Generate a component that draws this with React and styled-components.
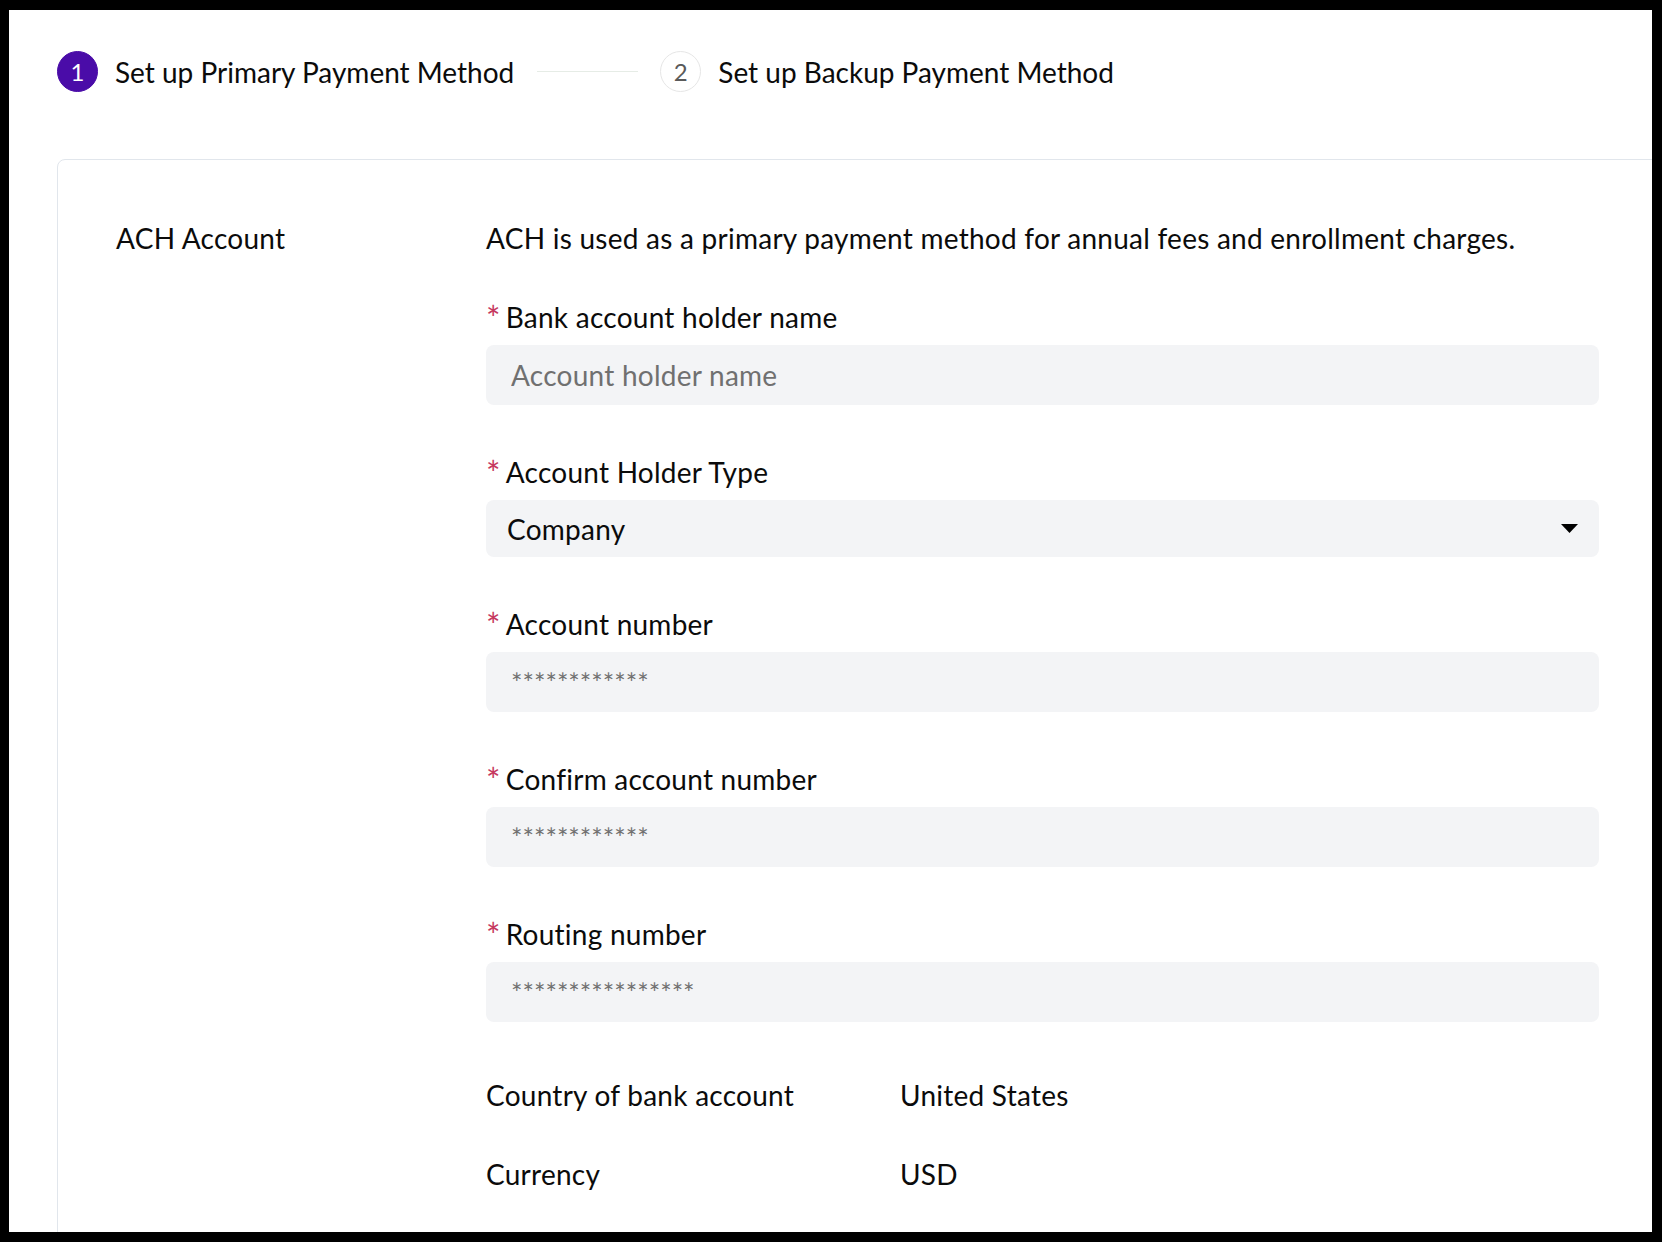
import React from "react";
import styled, { createGlobalStyle } from "styled-components";

const GlobalStyle = createGlobalStyle`
  html, body {
    margin: 0;
    padding: 0;
    background: #000;
  }
  * { box-sizing: border-box; }
  body {
    font-family: Lato, "Liberation Sans", sans-serif;
    color: #0b0b0b;
  }
`;

const Frame = styled.div`
  width: 1662px;
  height: 1242px;
  padding: 10px 10px 10px 9px;
  background: #000;
`;

const Panel = styled.div`
  width: 100%;
  height: 100%;
  background: #fff;
  overflow: hidden;
  padding: 41px 0 0 48px;
`;

const Stepper = styled.div`
  display: flex;
  align-items: center;
  height: 41px;
`;

const Step = styled.div`
  display: flex;
  align-items: center;
  gap: 17px;
`;

const StepDot = styled.div`
  width: 41px;
  height: 41px;
  border-radius: 50%;
  display: flex;
  align-items: center;
  justify-content: center;
  font-size: 24px;
  background: ${(p) => (p.$active ? "#4a0ca8" : "#fff")};
  color: ${(p) => (p.$active ? "#fff" : "#5a5a5a")};
  border: 1px solid ${(p) => (p.$active ? "#4a0ca8" : "#e6e6e6")};
`;

const StepTitle = styled.span`
  font-size: 28px;
  line-height: 40px;
  color: #0b0b0b;
`;

const Connector = styled.div`
  width: 101px;
  height: 1px;
  background: #e6ece6;
  margin: 0 22px 0 23px;
`;

const Card = styled.section`
  margin-top: 67px;
  margin-right: -60px;
  border: 1px solid #e1e6ec;
  border-radius: 8px;
  padding: 58px 0 60px 58px;
  display: grid;
  grid-template-columns: 370px 1113px;
  align-items: start;
  font-size: 28px;
  letter-spacing: 0.25px;
`;

const SectionTitle = styled.div`
  line-height: 40px;
`;

const Column = styled.div`
  display: flex;
  flex-direction: column;
`;

const Description = styled.p`
  margin: 0 0 39px;
  line-height: 40px;
`;

const Field = styled.div`
  display: flex;
  flex-direction: column;
  gap: 8px;
  margin-bottom: 47px;
`;

const Label = styled.label`
  display: block;
  height: 40px;
  line-height: 40px;
`;

const Required = styled.span`
  color: #c6385f;
  font-size: 34px;
  line-height: 0;
  margin-right: 5px;
  position: relative;
  top: 3px;
`;

const TextInput = styled.input`
  height: 60px;
  width: 100%;
  border: none;
  outline: none;
  border-radius: 8px;
  background: #f3f4f6;
  padding: 0 25px;
  font-family: inherit;
  letter-spacing: ${(p) => (p.$masked ? "0" : "0.25px")};
  font-size: ${(p) => (p.$masked ? "27px" : "28px")};
  color: #0b0b0b;
  &::placeholder {
    color: #707070;
    opacity: 1;
  }
`;

const SelectBox = styled.div`
  height: 57px;
  border-radius: 8px;
  background: #f3f4f6;
  display: flex;
  align-items: center;
  justify-content: space-between;
  padding: 0 21px 0 21px;
  color: #0b0b0b;
`;

const Caret = styled.svg`
  width: 17px;
  height: 9px;
  display: block;
`;

const InfoList = styled.div`
  display: flex;
  flex-direction: column;
  gap: 39px;
  margin-top: 6px;
`;

const InfoRow = styled.div`
  display: grid;
  grid-template-columns: 414px 1fr;
  line-height: 40px;
`;

const fields = [
  { label: "Bank account holder name", placeholder: "Account holder name" },
  { label: "Account Holder Type", select: "Company" },
  { label: "Account number", placeholder: "************", masked: true },
  { label: "Confirm account number", placeholder: "************", masked: true },
  { label: "Routing number", placeholder: "****************", masked: true },
];

export default function App() {
  return (
    <>
      <GlobalStyle />
      <Frame>
        <Panel>
          <Stepper>
            <Step>
              <StepDot $active>1</StepDot>
              <StepTitle>Set up Primary Payment Method</StepTitle>
            </Step>
            <Connector />
            <Step>
              <StepDot>2</StepDot>
              <StepTitle>Set up Backup Payment Method</StepTitle>
            </Step>
          </Stepper>
          <Card>
            <SectionTitle>ACH Account</SectionTitle>
            <Column>
              <Description>
                ACH is used as a primary payment method for annual fees and enrollment charges.
              </Description>
              {fields.map((f) => (
                <Field key={f.label}>
                  <Label>
                    <Required>*</Required>
                    {f.label}
                  </Label>
                  {f.select ? (
                    <SelectBox>
                      <span>{f.select}</span>
                      <Caret viewBox="0 0 17 9">
                        <path d="M0 0 H17 L8.5 9 Z" fill="#000" />
                      </Caret>
                    </SelectBox>
                  ) : (
                    <TextInput placeholder={f.placeholder} $masked={f.masked} />
                  )}
                </Field>
              ))}
              <InfoList>
                <InfoRow>
                  <span>Country of bank account</span>
                  <span>United States</span>
                </InfoRow>
                <InfoRow>
                  <span>Currency</span>
                  <span>USD</span>
                </InfoRow>
              </InfoList>
            </Column>
          </Card>
        </Panel>
      </Frame>
    </>
  );
}
